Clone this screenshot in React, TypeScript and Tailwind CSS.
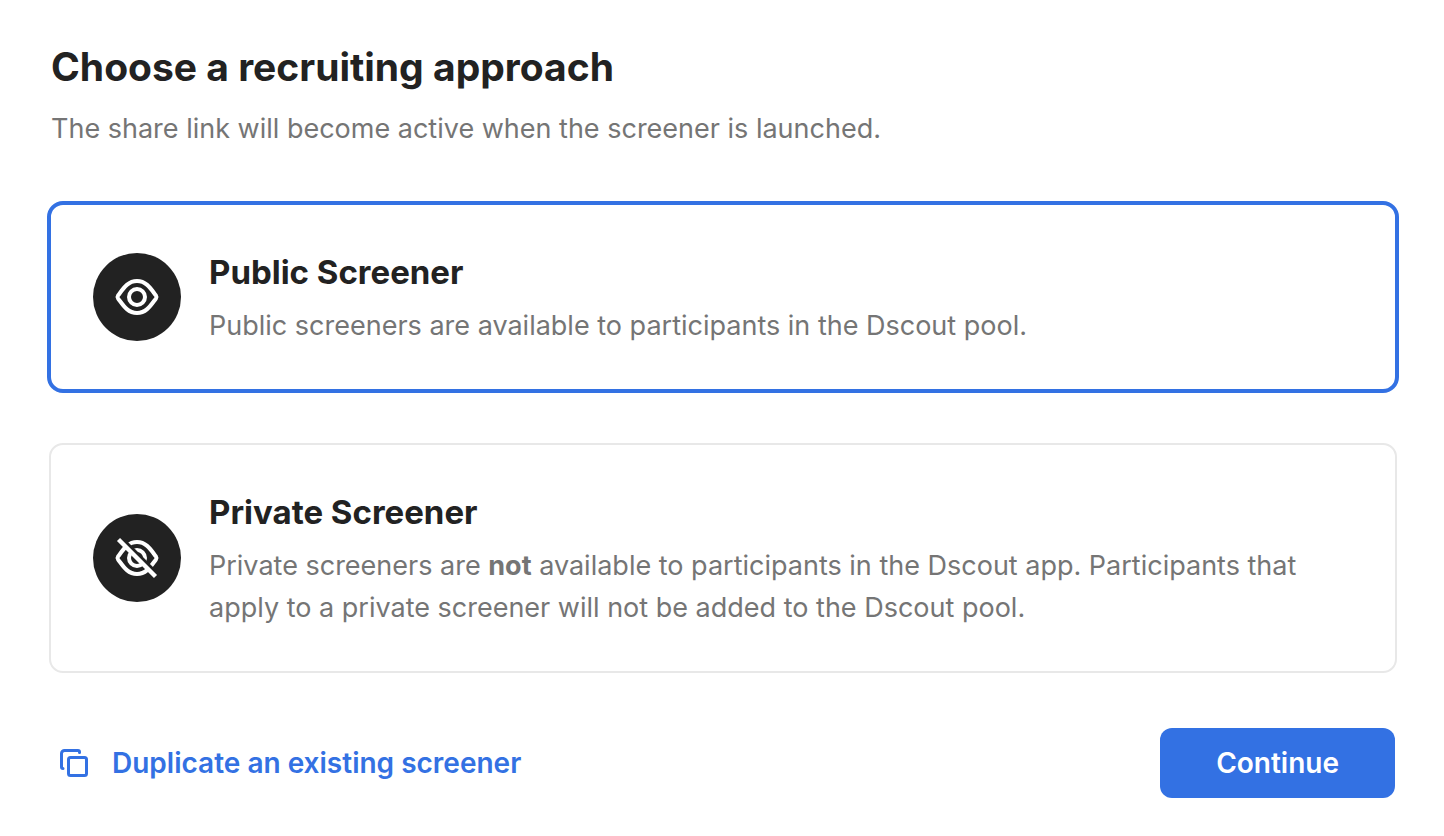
import { useState, type ReactNode } from 'react';

type Approach = 'public' | 'private';

const EYE =
  'M5 22.6 C9.4 17 14 8 24 8 S38.6 17 43 22.6 Q44 24 43 25.4 C38.6 31 34 40 24 40 S9.4 31 5 25.4 Q4 24 5 22.6 Z';

function EyeIcon() {
  return (
    <svg viewBox="0 0 48 48" className="size-12" fill="none" stroke="#fff" strokeWidth="4" aria-hidden="true">
      <path d={EYE} />
      <circle cx="24" cy="24" r="8" />
    </svg>
  );
}

function EyeOffIcon() {
  return (
    <svg viewBox="0 0 48 48" className="size-12" fill="none" stroke="#fff" strokeWidth="4" aria-hidden="true">
      <path d={EYE} />
      <circle cx="24" cy="24" r="8" />
      <path d="M7 3 L45 41" stroke="#222" strokeWidth="4" />
      <path d="M5.5 5.5 L42.5 42.5" strokeWidth="4.4" />
    </svg>
  );
}

function DuplicateIcon() {
  return (
    <svg
      viewBox="0 0 28 28"
      className="size-7"
      fill="none"
      stroke="currentColor"
      strokeWidth="3"
      strokeLinecap="round"
      strokeLinejoin="round"
      aria-hidden="true"
    >
      <rect x="8.5" y="8.5" width="18" height="18" rx="2" />
      <path d="M3 19.5 Q1.5 19.5 1.5 18 V4.5 A3 3 0 0 1 4.5 1.5 H18 Q19.5 1.5 19.5 3 V3.5" />
    </svg>
  );
}

interface OptionProps {
  value: Approach;
  selected: boolean;
  onSelect: (value: Approach) => void;
  icon: ReactNode;
  title: string;
  children: ReactNode;
}

function ApproachOption({ value, selected, onSelect, icon, title, children }: OptionProps) {
  return (
    <label
      className={`relative flex cursor-pointer items-center gap-7 p-[42px] ${
        selected ? '-m-0.5 rounded-2xl border-4 border-[#3371e3]' : 'rounded-[14px] border-2 border-[#e8e8e8]'
      }`}
    >
      <input
        type="radio"
        name="approach"
        value={value}
        checked={selected}
        onChange={() => onSelect(value)}
        className="sr-only"
      />
      <span className="flex size-[88px] shrink-0 items-center justify-center rounded-full bg-[#222]">
        {icon}
      </span>
      <span className="block">
        <span className="mb-2 block text-[33px] leading-[50px] font-bold text-[#222]">{title}</span>
        <span className="block text-[27px] leading-[42px] text-[#757575]">{children}</span>
      </span>
    </label>
  );
}

export default function App() {
  const [approach, setApproach] = useState<Approach>('public');

  return (
    <main className="bg-white py-10 pr-[47px] pl-[49px] font-['Inter',sans-serif]">
      {/* HEADER */}
      <header className="px-0.5">
        <h1 className="text-[39px] leading-[54px] font-bold text-[#222]">Choose a recruiting approach</h1>
        <p className="mt-3.5 text-[27px] leading-[42px] text-[#757575]">
          The share link will become active when the screener is launched.
        </p>
      </header>

      {/* OPTIONS */}
      <div className="mt-[53px] flex flex-col gap-[52px]" role="radiogroup" aria-label="Recruiting approach">
        <ApproachOption
          value="public"
          selected={approach === 'public'}
          onSelect={setApproach}
          icon={<EyeIcon />}
          title="Public Screener"
        >
          Public screeners are available to participants in the Dscout pool.
        </ApproachOption>
        <ApproachOption
          value="private"
          selected={approach === 'private'}
          onSelect={setApproach}
          icon={<EyeOffIcon />}
          title="Private Screener"
        >
          Private screeners are <strong className="font-bold">not</strong> available to participants in the
          Dscout app. Participants that apply to a private screener will not be added to the Dscout pool.
        </ApproachOption>
      </div>

      {/* ACTIONS */}
      <footer className="mt-[55px] flex items-center justify-between pr-0.5 pl-[11px]">
        <a href="#duplicate" className="flex items-center gap-6 text-[28px] leading-[42px] font-semibold text-[#3371e3]">
          <DuplicateIcon />
          Duplicate an existing screener
        </a>
        <button
          type="button"
          className="rounded-xl bg-[#3371e3] px-14 py-3.5 text-[28px] leading-[42px] font-semibold text-white"
        >
          Continue
        </button>
      </footer>
    </main>
  );
}
